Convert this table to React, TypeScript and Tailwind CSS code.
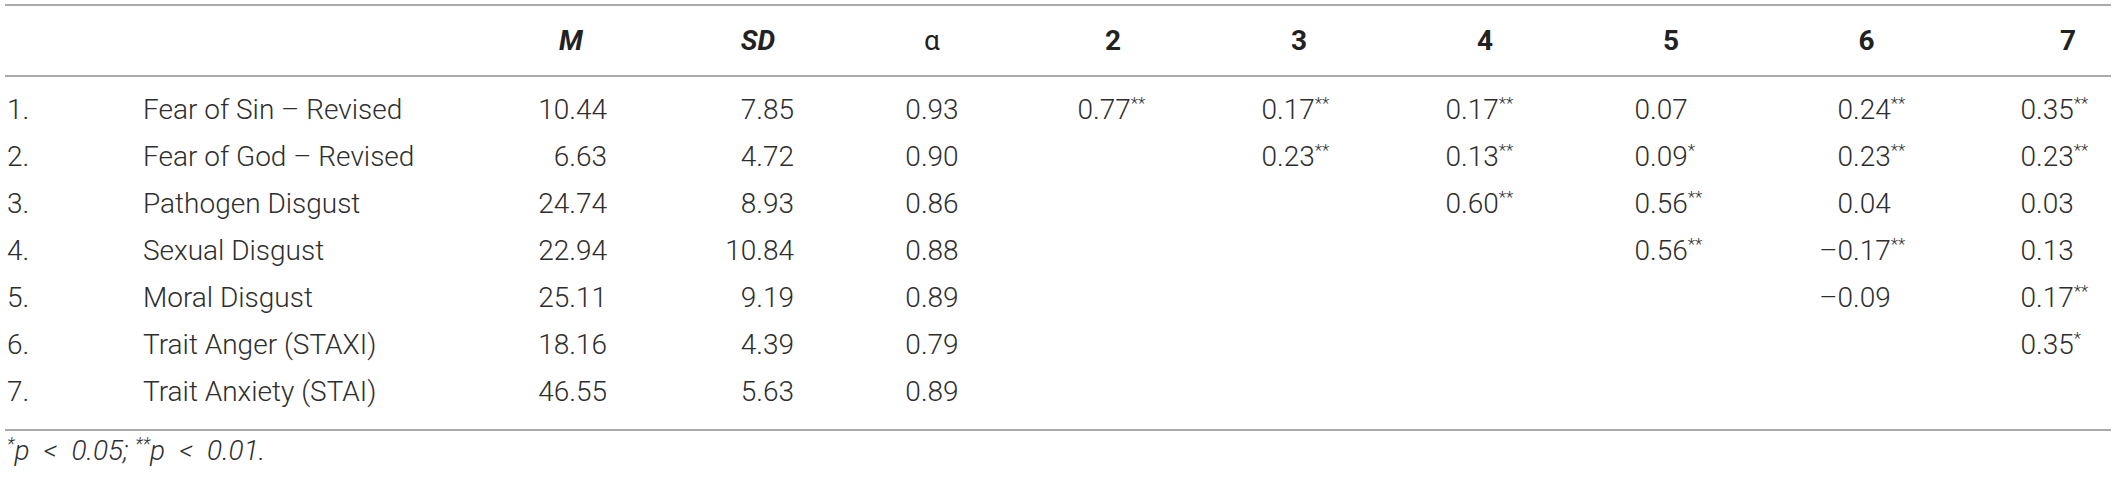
import type { ReactNode } from "react";

// Correlation table: descriptives and intercorrelations
const grid =
	"grid grid-cols-[138px_392px_72px_187px_226px_186px_186px_186px_186px_205px_142px]";

interface Row {
	n: string;
	label: string;
	m: string;
	sd: string;
	alpha: string;
	r: string[];
}

const rows: Row[] = [
	{ n: "1.", label: "Fear of Sin – Revised", m: "10.44", sd: "7.85", alpha: "0.93", r: ["0.77**", "0.17**", "0.17**", "0.07", "0.24**", "0.35**"] },
	{ n: "2.", label: "Fear of God – Revised", m: "6.63", sd: "4.72", alpha: "0.90", r: ["", "0.23**", "0.13**", "0.09*", "0.23**", "0.23**"] },
	{ n: "3.", label: "Pathogen Disgust", m: "24.74", sd: "8.93", alpha: "0.86", r: ["", "", "0.60**", "0.56**", "0.04", "0.03"] },
	{ n: "4.", label: "Sexual Disgust", m: "22.94", sd: "10.84", alpha: "0.88", r: ["", "", "", "0.56**", "–0.17**", "0.13"] },
	{ n: "5.", label: "Moral Disgust", m: "25.11", sd: "9.19", alpha: "0.89", r: ["", "", "", "", "–0.09", "0.17**"] },
	{ n: "6.", label: "Trait Anger (STAXI)", m: "18.16", sd: "4.39", alpha: "0.79", r: ["", "", "", "", "", "0.35*"] },
	{ n: "7.", label: "Trait Anxiety (STAI)", m: "46.55", sd: "5.63", alpha: "0.89", r: ["", "", "", "", "", ""] },
];

const corrPad = ["pl-[33px]", "pl-[31px]", "pl-[29px]", "pl-[32px]", "pl-[49px]", "pl-[27px]"];

function Stars({ s, className = "text-[17px]" }: { s: string; className?: string }) {
	if (!s) return null;
	return <span className={`align-super leading-none ${className}`}>{s}</span>;
}

function Corr({ value }: { value: string }) {
	const m = value.match(/^(–?\d+)(\.\d+)(\**)$/);
	if (!m) return null;
	return (
		<span className="whitespace-nowrap">
			<span className="inline-block w-[40px] text-right">{m[1]}</span>
			<span>{m[2]}</span>
			<Stars s={m[3]} />
		</span>
	);
}

function Cell({ className = "", children }: { className?: string; children?: ReactNode }) {
	return <div className={`flex items-center ${className}`}>{children}</div>;
}

export default function App() {
	return (
		<div className="w-[2117px] h-[480px] bg-white text-[#2e2e2e] font-[Roboto,'Liberation_Sans',sans-serif]">
			<div className="ml-[5px] w-[2106px] pt-[4px]">
				{/* header */}
				<div className={`${grid} h-[73px] border-t-2 border-b-2 border-[#aaaaaa] text-[28px] font-bold text-[#222]`}>
					<Cell />
					<Cell />
					<Cell className="justify-center italic">M</Cell>
					<Cell className="justify-center pl-[115px] italic">SD</Cell>
					<Cell className="justify-center pl-[50px] font-normal">α</Cell>
					<Cell className="justify-center">2</Cell>
					<Cell className="justify-center">3</Cell>
					<Cell className="justify-center">4</Cell>
					<Cell className="justify-center">5</Cell>
					<Cell className="justify-center">6</Cell>
					<Cell className="justify-center pl-[56px]">7</Cell>
				</div>

				{/* body */}
				<div className="pt-[9px] pb-[14px] border-b-2 border-[#aaaaaa] text-[28px] font-light">
					{rows.map((row) => (
						<div key={row.n} className={`${grid} h-[47px]`}>
							<Cell className="pl-[2px]">{row.n}</Cell>
							<Cell>{row.label}</Cell>
							<Cell className="justify-end">{row.m}</Cell>
							<Cell className="justify-end">{row.sd}</Cell>
							<Cell className="justify-center pl-[50px]">{row.alpha}</Cell>
							{row.r.map((v, i) => (
								<Cell key={i} className={corrPad[i]}>
									<Corr value={v} />
								</Cell>
							))}
						</div>
					))}
				</div>

				{/* footnote */}
				<p className="pt-[3px] pl-[2px] text-[28px] leading-[34px] italic font-light whitespace-pre">
					<Stars s="*" className="text-[18px]" />p{"\u2002"}&lt;{"\u2002"}0.05; <Stars s="**" className="text-[18px]" />p{"\u2002"}&lt;{"\u2002"}0.01.
				</p>
			</div>
		</div>
	);
}
